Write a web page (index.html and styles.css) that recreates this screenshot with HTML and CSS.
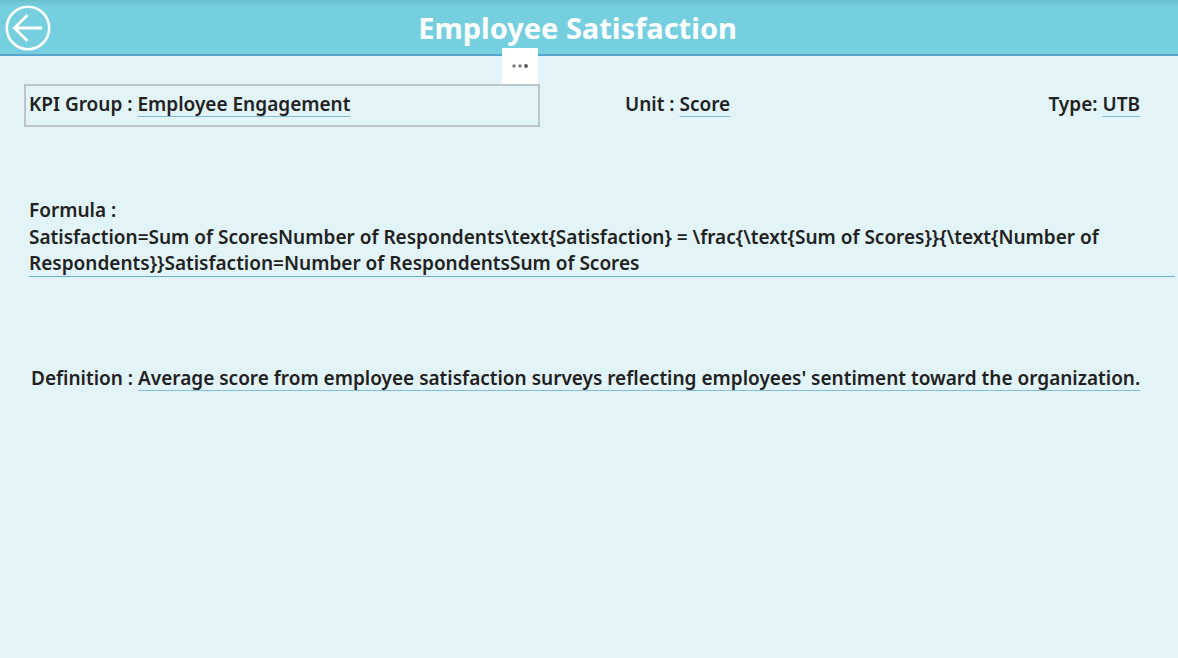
FILE: index.html
```html
<!DOCTYPE html>
<html lang="en">
<head>
<meta charset="utf-8">
<title>Employee Satisfaction</title>
<link rel="stylesheet" href="styles.css">
</head>
<body>
<header class="header">
  <button class="back" type="button" aria-label="Back">
    <svg class="back-icon" viewBox="0 0 46 46" fill="none" stroke="currentColor">
      <circle cx="23" cy="23" r="21.2" stroke-width="2.6"/>
      <path d="M37 23H10M22.5 10L9.5 23L22.5 36" stroke-width="2.8"/>
    </svg>
  </button>
  <h1 class="title">Employee Satisfaction</h1>
</header>
<main class="content">
  <section class="summary">
    <div class="card">
      <button class="more" type="button" aria-label="More options">
        <svg class="more-icon" viewBox="0 0 18 4" fill="#777">
          <circle cx="3" cy="2" r="1.7"/><circle cx="9" cy="2" r="1.7"/><circle cx="15" cy="2" r="1.9" fill="#555"/>
        </svg>
      </button>
      KPI Group : <span class="value">Employee Engagement</span>
    </div>
    <div class="unit">Unit : <span class="value">Score</span></div>
    <div class="type">Type: <span class="value">UTB</span></div>
  </section>
  <section class="formula">
    <h2 class="label">Formula :</h2>
    <p class="formula-text">Satisfaction=Sum of ScoresNumber of Respondents\text{Satisfaction} = \frac{\text{Sum of Scores}}{\text{Number of Respondents}}Satisfaction=Number of RespondentsSum of Scores</p>
  </section>
  <section class="definition">Definition : <span class="value">Average score from employee satisfaction surveys reflecting employees' sentiment toward the organization.</span></section>
</main>
</body>
</html>
```
FILE: styles.css
```css
* { box-sizing: border-box; }
body {
  margin: 0;
  min-height: 100vh;
  background: #e2f4f8;
  color: #212121;
  font: 600 19px/26px "Segoe UI", "Noto Sans", "Open Sans", sans-serif;
}
.header {
  display: grid;
  grid-template-columns: 46px 1fr 74px;
  align-items: center;
  height: 56px;
  padding: 1px 0 0 5px;
  background: linear-gradient(#69bfcc, #75cfdf 6px);
  border-bottom: 2px solid #57a5cc;
  color: #fff;
}
.back {
  width: 46px;
  height: 46px;
  padding: 0;
  border: 0;
  background: none;
  color: inherit;
}
.back-icon { display: block; }
.title {
  margin: 0;
  text-align: center;
  font-size: 29px;
  line-height: 40px;
  font-weight: 700;
}
.content { padding: 28px 3px 0 24px; }
.summary {
  display: grid;
  grid-template-columns: 516fr 300fr 300fr;
  padding-right: 35px;
}
.card {
  position: relative;
  height: 43px;
  padding: 5px 3px;
  border: 2px solid #bcc4c9;
}
.more {
  position: absolute;
  right: 0;
  bottom: calc(100% + 2px);
  display: grid;
  place-items: center;
  width: 36px;
  height: 36px;
  padding: 0;
  border: 0;
  background: #fff;
}
.more-icon { width: 18px; height: 4px; }
.unit { padding: 7px 0 0 85px; }
.type { padding-top: 7px; text-align: right; }
.value {
  text-decoration: underline 1px #7fbfe0;
  text-decoration-skip-ink: none;
  text-underline-offset: 5px;
}
.formula { padding: 70px 0 0 5px; }
.label {
  margin: 0 0 1px;
  font: inherit;
}
.formula-text {
  margin: 0;
  box-shadow: 0 1px #68b1d3;
}
.definition { padding: 89px 0 0 7px; }
```
